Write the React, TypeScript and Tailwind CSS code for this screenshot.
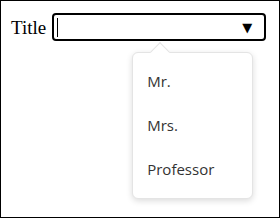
import React from "react";

const options = ["Mr.", "Mrs.", "Professor"];

export default function App() {
    return (
        <div className="w-[280px] h-[218px] border border-black bg-white overflow-hidden">
            <div className="flex items-center pl-[10px] pt-[12px]">
                <span className="text-[19px] leading-none text-black mr-[6px] mt-[1px]" style={{ fontFamily: '"Liberation Serif", serif' }}>
                    Title
                </span>
                <div className="relative w-[214px] h-[28px] border-2 border-black rounded-[4px] flex items-center">
                    {/* caret */}
                    <span className="ml-[3px] w-px h-[19px] bg-black"></span>
                    <span className="ml-auto mr-[12px] text-[13px] leading-none text-black" style={{ fontFamily: '"DejaVu Sans", sans-serif' }}>
                        ▼
                    </span>

                    {/* dropdown menu */}
                    <div className="absolute left-[78px] top-[37px] w-[121px] h-[147px] bg-white border border-[#e4e4e4] rounded-[6px] shadow-[0_2px_6px_rgba(0,0,0,0.14)] pt-[6px] pb-2 z-10">
                        <div className="absolute left-[20px] -top-[8px] w-[14px] h-[14px] bg-white border-l border-t border-[#e4e4e4] rotate-45"></div>
                        {options.map((opt) => (
                            <div
                                key={opt}
                                className="h-[44px] flex items-center px-[14px] text-[15px] text-[#333]"
                                style={{ fontFamily: '"Open Sans", sans-serif' }}
                            >
                                {opt}
                            </div>
                        ))}
                    </div>
                </div>
            </div>
        </div>
    );
}
